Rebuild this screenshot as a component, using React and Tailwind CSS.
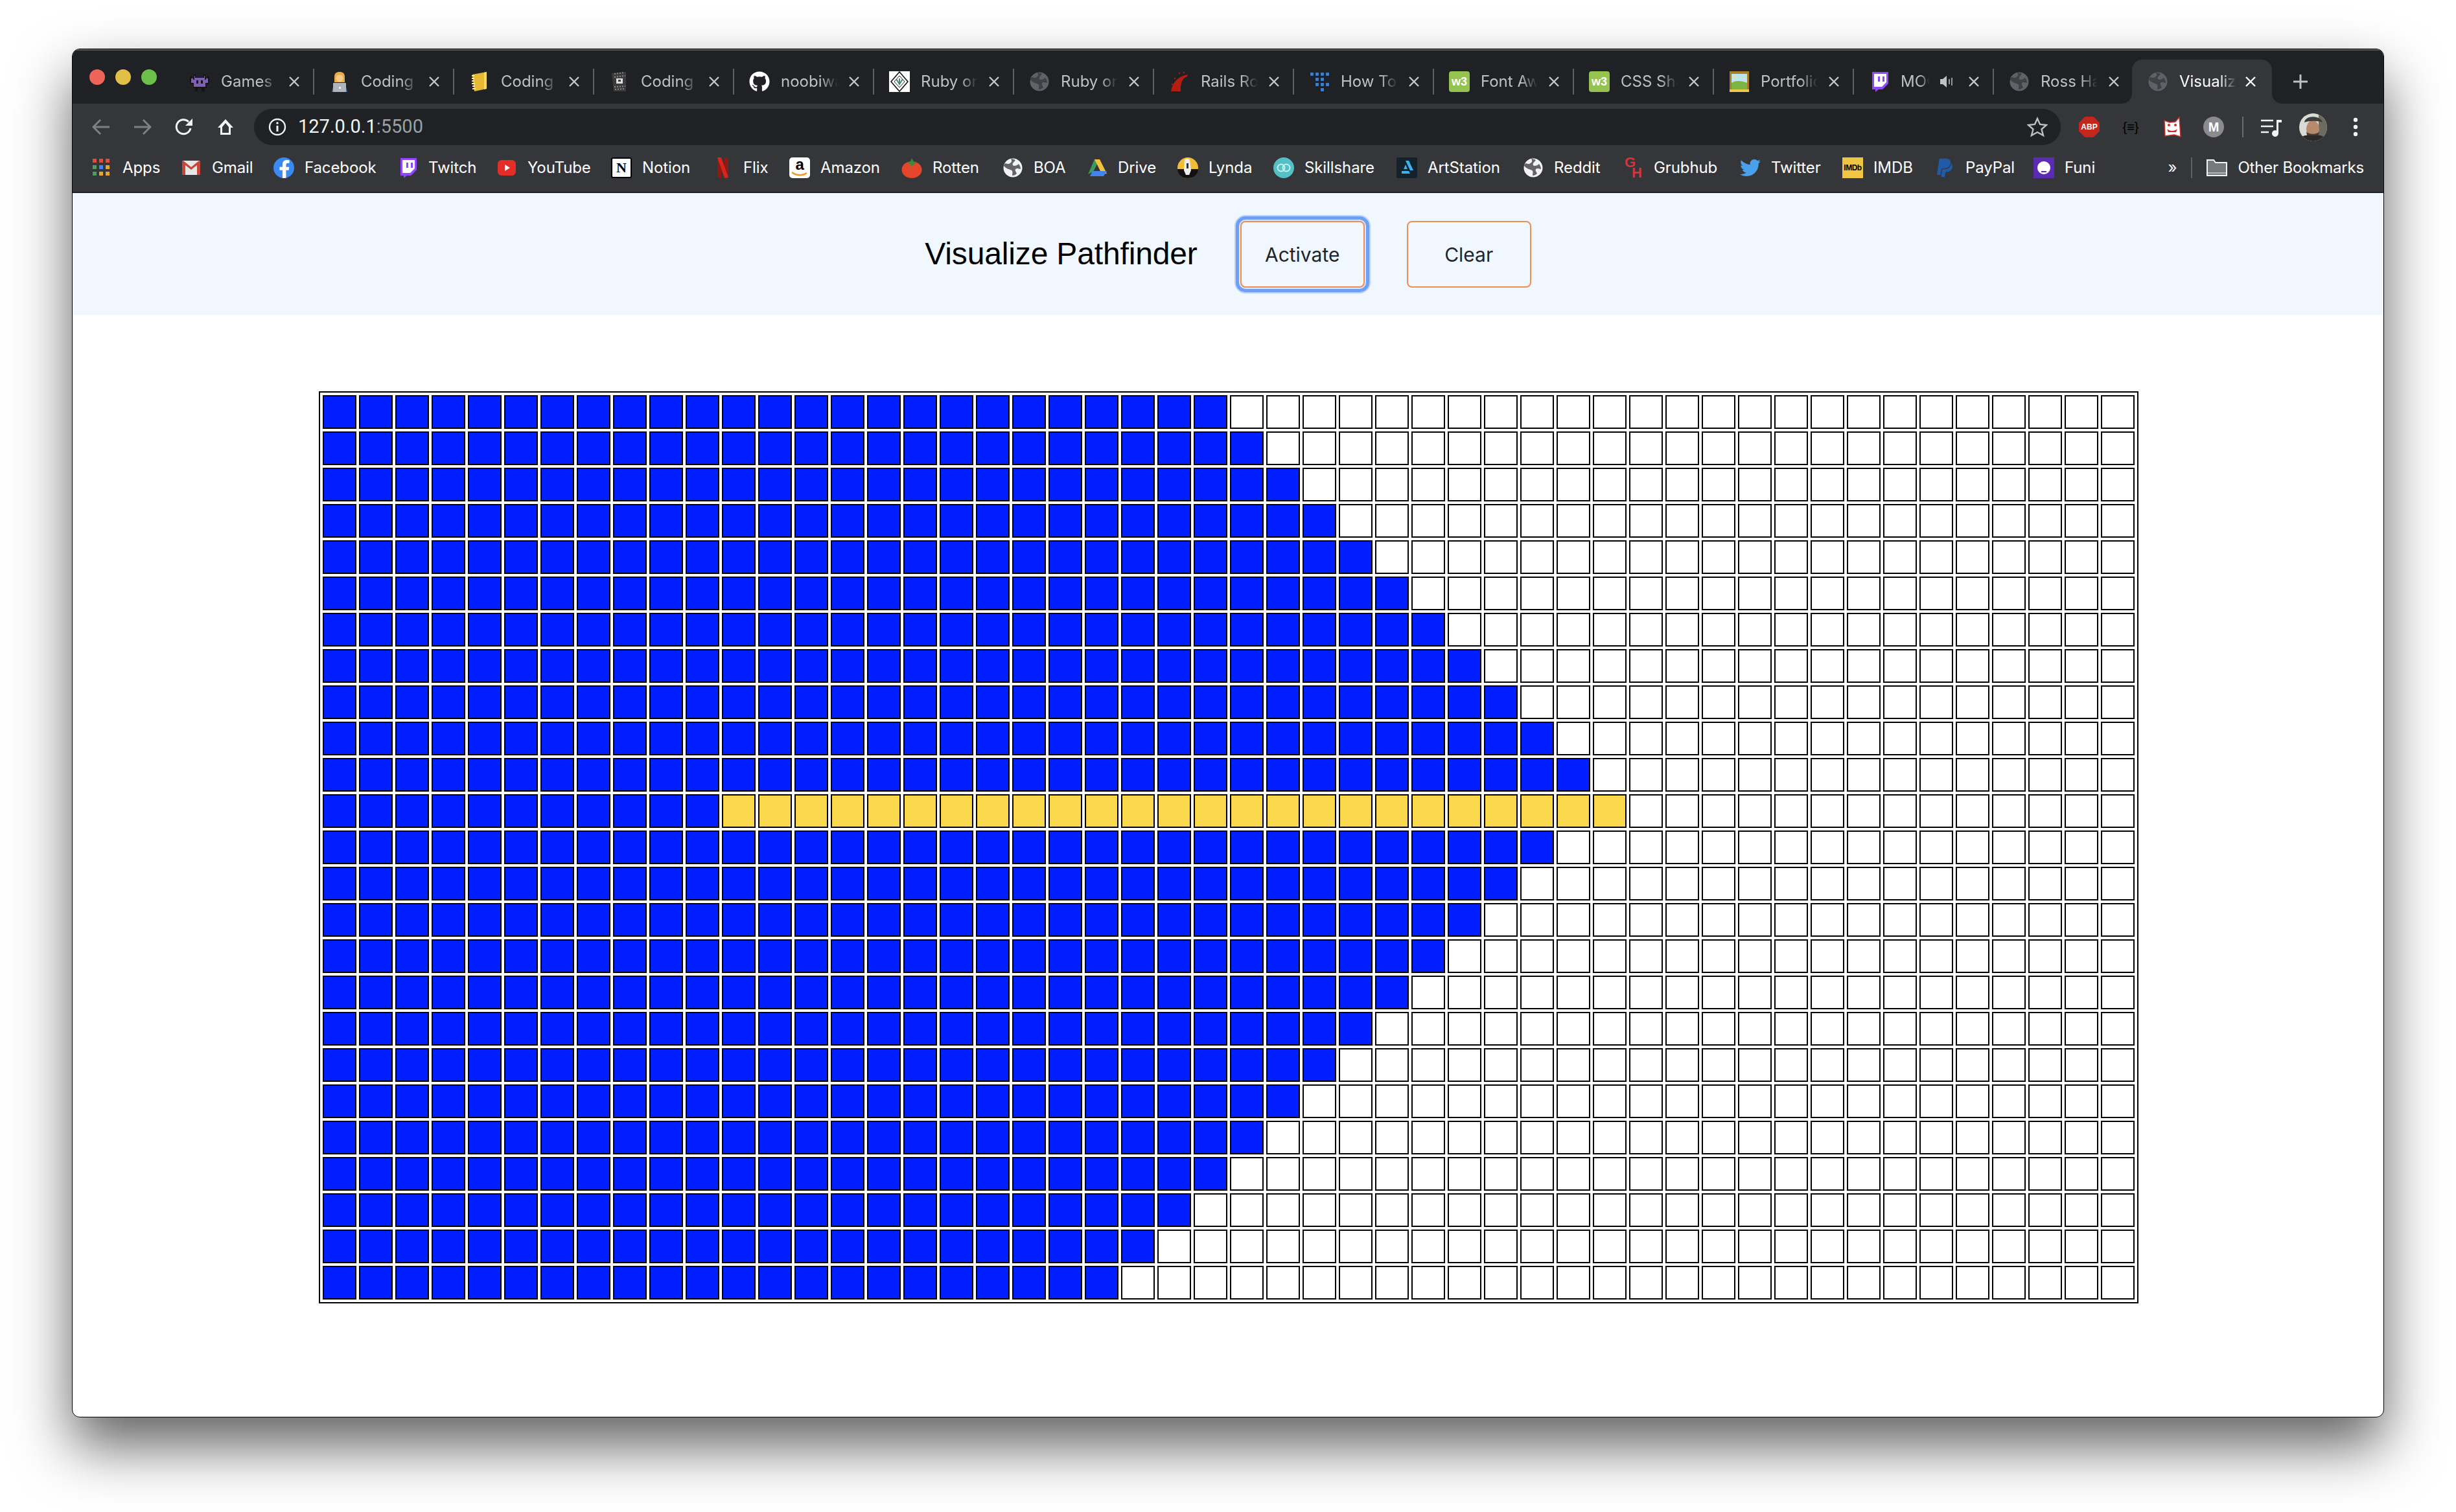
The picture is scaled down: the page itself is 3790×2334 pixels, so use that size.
import { FaGithub, FaTwitter, FaPaypal, FaFacebookF } from 'react-icons/fa'

const Fav = ({ children }) => (
  <svg viewBox="0 0 32 32" className="w-8 h-8 shrink-0">{children}</svg>
)

const Globe = ({ disc = '#5f6368', land = '#35363a' }) => (
  <Fav>
    <circle cx="16" cy="16" r="14.5" fill={disc} />
    <path d="M5 9c3 2 6 1 8-1 2-2 1-4 0-6 2 0 5 1 7 2-1 2-3 3-4 5-1 2 0 4 2 4 3 0 5-1 7-3 2 3 3 5 3 8-2 0-3-1-5-1-3 0-4 2-3 4l2 4c-2 2-4 3-7 3 0-3 1-5 0-7-1-2-4-2-6-3-3-1-5-3-7-5 0-2 1-3 3-4z" fill={land} opacity="0.75" />
  </Fav>
)

const Invader = () => (
  <Fav>
    <path d="M1 8h3v3h3V5h3v4h12V5h3v6h3V8h3v12h-4v6h-3v5h-5v-5h-6v5H9v-5H6v-6H1z" fill="#141414" />
    <path d="M3 11h3v2h2V7h1v3h14V7h1v6h2v-2h3v7h-4v6H7v-6H3z" fill="#7d5fb8" />
    <rect x="11" y="14" width="3" height="5" fill="#141414" />
    <rect x="18" y="14" width="3" height="5" fill="#141414" />
  </Fav>
)

const Coder = () => (
  <Fav>
    <path d="M8 9c0-6 3-8 8-8s8 2 8 8v8H8z" fill="#e9ad45" />
    <circle cx="16" cy="11" r="5.5" fill="#f3c78e" />
    <path d="M4 32l2-8c2-3 18-3 20 0l2 8z" fill="#3f6fb5" />
    <rect x="6" y="18" width="20" height="14" rx="1" fill="#aeb4bb" />
    <rect x="15" y="24" width="3" height="3" fill="#eee" />
  </Fav>
)

const YellowBook = () => (
  <Fav>
    <path d="M5 5l22-4v26L8 31z" fill="#e5b934" />
    <path d="M23 2l4-1v26l-4 1z" fill="#f5d96b" />
    <path d="M4 7h4M4 11h4M4 15h4M4 19h5M5 23h4M5 27h5" stroke="#fff1a8" strokeWidth="2" />
  </Fav>
)

const DarkBook = () => (
  <Fav>
    <path d="M4 3l22-2v30H7z" fill="#3b3b3b" />
    <path d="M8 4l16-2M8 9l17-2M8 24l17-1M9 28l16-1" stroke="#8a8a8a" strokeWidth="2" strokeDasharray="2 2" />
    <rect x="11" y="11" width="10" height="8" fill="#ddd" />
    <rect x="14" y="13" width="4" height="3" fill="#444" />
  </Fav>
)

const RubyDiamond = () => (
  <Fav>
    <rect width="32" height="32" fill="#fff" />
    <path d="M16 1l13 15-13 15L3 16z" fill="#fff" stroke="#111" strokeWidth="1.6" />
    <path d="M16 7l8 9-8 9-8-9z" fill="none" stroke="#222" strokeWidth="1" />
    <path d="M11 12l5 8 5-8M16 20v-9" fill="none" stroke="#4f8a6b" strokeWidth="2" />
  </Fav>
)

const Rails = () => (
  <Fav>
    <path d="M3 31C5 18 13 8 29 5l-1 3C20 11 17 20 18 31z" fill="#b51d12" />
    <circle cx="9" cy="11" r="1.2" fill="#b51d12" />
    <circle cx="16" cy="3" r="1.2" fill="#b51d12" />
    <circle cx="5" cy="20" r="1.2" fill="#b51d12" />
    <circle cx="23" cy="2" r="1.2" fill="#b51d12" />
  </Fav>
)

const Dots = () => (
  <Fav>
    <g fill="#3f7fc4">
      <rect x="2" y="2" width="5" height="5" rx="1" />
      <rect x="10" y="2" width="5" height="5" rx="1" />
      <rect x="18" y="2" width="5" height="5" rx="1" />
      <rect x="26" y="2" width="5" height="5" rx="1" />
      <rect x="10" y="10" width="5" height="5" rx="1" />
      <rect x="18" y="10" width="5" height="5" rx="1" />
      <rect x="10" y="18" width="5" height="5" rx="1" />
      <rect x="18" y="18" width="5" height="5" rx="1" />
      <rect x="26" y="18" width="5" height="5" rx="1" />
      <rect x="18" y="26" width="5" height="5" rx="1" />
    </g>
  </Fav>
)

const W3 = () => (
  <div className="w-8 h-8 shrink-0 rounded-[4px] bg-[#95c34f] flex items-center justify-center text-white text-[18px] leading-none font-bold font-['Liberation_Sans',sans-serif]">
    w3
  </div>
)

const Frame = () => (
  <Fav>
    <rect x="1" y="0" width="30" height="32" fill="#a87c28" />
    <rect x="4" y="4" width="24" height="24" fill="#bfe3ea" />
    <path d="M4 18c6-4 14-4 24 0v10H4z" fill="#7cb342" />
    <path d="M7 6h3v5H7z" fill="#f6e26b" />
    <rect x="1" y="28" width="30" height="4" fill="#eecb4a" />
  </Fav>
)

const Twitch = () => (
  <Fav>
    <path d="M5 1h25v18l-9 9h-6l-5 4v-4H5z" fill="#9146ff" />
    <path d="M8 4h19v13l-7 7H8z" fill="#fff" />
    <rect x="14" y="8" width="3" height="8" fill="#9146ff" />
    <rect x="21" y="8" width="3" height="8" fill="#9146ff" />
  </Fav>
)

const Gmail = () => (
  <Fav>
    <rect x="2" y="5" width="28" height="22" rx="2" fill="#e6e6e6" />
    <path d="M2 7v20h5V12l9 7 9-7v15h5V7c0-2-2-2-3-1L16 15 5 6C4 5 2 5 2 7z" fill="#c5473a" />
  </Fav>
)

const Facebook = () => (
  <div className="w-8 h-8 shrink-0 rounded-full bg-[#3b8af2] flex items-end justify-center overflow-hidden">
    <FaFacebookF className="w-6 h-7 text-white translate-x-[1px]" />
  </div>
)

const YouTube = () => (
  <Fav>
    <rect x="2" y="4" width="28" height="24" rx="6" fill="#e52d27" />
    <path d="M13 11l8 5-8 5z" fill="#fff" />
  </Fav>
)

const Notion = () => (
  <div className="w-8 h-8 shrink-0 bg-white border-2 border-black rounded-[3px] flex items-center justify-center text-black text-[22px] leading-none font-bold font-['Liberation_Serif',serif]">
    N
  </div>
)

const Netflix = () => (
  <Fav>
    <path d="M8 0h6v32l-6-1z" fill="#8f1a14" />
    <path d="M19 0h6v31l-6 1z" fill="#8f1a14" />
    <path d="M8 0h6l11 31-6 1z" fill="#d8241c" />
  </Fav>
)

const Amazon = () => (
  <div className="w-8 h-8 shrink-0 bg-white rounded-[5px] relative flex justify-center overflow-hidden">
    <span className="text-black text-[24px] leading-[22px] font-bold font-['Liberation_Sans',sans-serif]">a</span>
    <svg viewBox="0 0 32 10" className="absolute bottom-[1px] left-0 w-8 h-[10px]">
      <path d="M4 2c6 5 16 6 23 1" fill="none" stroke="#f19a2a" strokeWidth="2.5" />
    </svg>
  </div>
)

const Rotten = () => (
  <Fav>
    <ellipse cx="16" cy="19" rx="15.5" ry="13" fill="#e5452a" />
    <path d="M9 7l5 0 2-6 3 6 5 1-5 3-4 3-2-4z" fill="#3a8a3a" />
  </Fav>
)

const Drive = () => (
  <Fav>
    <path d="M12 3h8l-10 19-8 4z" fill="#3a9a5c" />
    <path d="M12 3h8l11 22h-8z" fill="#f2c33b" />
    <path d="M9 21h22l-5 8H5z" fill="#4583ec" />
  </Fav>
)

const Lynda = () => (
  <Fav>
    <circle cx="16" cy="16" r="16" fill="#f0bd35" />
    <path d="M0 18h32c0 8-7 14-16 14S0 26 0 18z" fill="#111" />
    <path d="M11 4c2-3 6-3 8 0l2 16-3 7h-5l-3-7z" fill="#eee" />
    <path d="M14 9h3v8h-3z" fill="#333" />
  </Fav>
)

const Skillshare = () => (
  <Fav>
    <circle cx="16" cy="16" r="16" fill="#52c0c5" />
    <circle cx="12" cy="16" r="5.5" fill="none" stroke="#c8f0ef" strokeWidth="2" />
    <circle cx="20" cy="16" r="5.5" fill="none" stroke="#c8f0ef" strokeWidth="2" />
  </Fav>
)

const ArtStation = () => (
  <Fav>
    <rect width="32" height="32" rx="3" fill="#13222b" />
    <path d="M14 5h5l7 15h-5z" fill="#3db2ee" />
    <path d="M8 21h11l2 4H8zM12 16l2-5 3 7h-6z" fill="#3db2ee" />
  </Fav>
)

const Grubhub = () => (
  <div className="w-8 h-8 shrink-0 relative text-[#d8333b] text-[22px] leading-none font-bold font-['Liberation_Sans',sans-serif]">
    <span className="absolute left-[3px] top-[-3px]">G</span>
    <span className="absolute left-[14px] top-[13px]">H</span>
  </div>
)

const Twitter = () => <FaTwitter className="w-8 h-8 shrink-0 text-[#4aa1eb]" />

const Imdb = () => (
  <div className="w-8 h-8 shrink-0 bg-[#f0c541] flex items-center justify-center text-black text-[12px] leading-none font-bold tracking-[-0.5px] font-['Liberation_Sans',sans-serif]">
    IMDb
  </div>
)

const Paypal = () => <FaPaypal className="w-8 h-8 shrink-0 text-[#1f5ba8]" />

const Funi = () => (
  <Fav>
    <rect width="32" height="32" fill="#5b2bb5" />
    <circle cx="16" cy="16" r="10" fill="#fff" />
    <rect x="12" y="21" width="8" height="2" fill="#5b2bb5" />
  </Fav>
)

const AppsGrid = () => {
  const colors = [
    'bg-[#e34b3c]', 'bg-[#e34b3c]', 'bg-[#e34b3c]',
    'bg-[#4f9e5f]', 'bg-[#4285f4]', 'bg-[#e8a332]',
    'bg-[#4f9e5f]', 'bg-[#e8a332]', 'bg-[#e8a332]',
  ]
  return (
    <div className="w-8 h-8 shrink-0 grid grid-cols-[repeat(3,6px)] auto-rows-[6px] gap-x-1 gap-y-1 pl-[2px] pt-[2px]">
      {colors.map((c, i) => (
        <div key={i} className={c} />
      ))}
    </div>
  )
}

const tabs = [
  { icon: <Invader />, title: 'Games for Kids' },
  { icon: <Coder />, title: 'Coding Notes' },
  { icon: <YellowBook />, title: 'Coding Book' },
  { icon: <DarkBook />, title: 'Coding Journal' },
  { icon: <FaGithub className="w-8 h-8 shrink-0 text-white" />, title: 'noobiwan' },
  { icon: <RubyDiamond />, title: 'Ruby on Rails' },
  { icon: <Globe />, title: 'Ruby on Rails' },
  { icon: <Rails />, title: 'Rails Routing' },
  { icon: <Dots />, title: 'How To Code' },
  { icon: <W3 />, title: 'Font Awesome' },
  { icon: <W3 />, title: 'CSS Shadows' },
  { icon: <Frame />, title: 'Portfolio Site' },
  { icon: <Twitch />, title: 'MOONMOON', audio: true },
  { icon: <Globe />, title: 'Ross Hall Site', last: true },
]

// widths keep each bookmark's label on the same x as the reference
const bookmarks = [
  { icon: <AppsGrid />, label: 'Apps', width: 'w-[138px]' },
  { icon: <Gmail />, label: 'Gmail', width: 'w-[143px]' },
  { icon: <Facebook />, label: 'Facebook', width: 'w-[191px]' },
  { icon: <Twitch />, label: 'Twitch', width: 'w-[153px]' },
  { icon: <YouTube />, label: 'YouTube', width: 'w-[177px]' },
  { icon: <Notion />, label: 'Notion', width: 'w-[156px]' },
  { icon: <Netflix />, label: 'Flix', width: 'w-[119px]' },
  { icon: <Amazon />, label: 'Amazon', width: 'w-[173px]' },
  { icon: <Rotten />, label: 'Rotten', width: 'w-[156px]' },
  { icon: <Globe disc="#f1f3f4" land="#35363a" />, label: 'BOA', width: 'w-[130px]' },
  { icon: <Drive />, label: 'Drive', width: 'w-[140px]' },
  { icon: <Lynda />, label: 'Lynda', width: 'w-[148px]' },
  { icon: <Skillshare />, label: 'Skillshare', width: 'w-[190px]' },
  { icon: <ArtStation />, label: 'ArtStation', width: 'w-[195px]' },
  { icon: <Globe disc="#f1f3f4" land="#35363a" />, label: 'Reddit', width: 'w-[154px]' },
  { icon: <Grubhub />, label: 'Grubhub', width: 'w-[181px]' },
  { icon: <Twitter />, label: 'Twitter', width: 'w-[158px]' },
  { icon: <Imdb />, label: 'IMDB', width: 'w-[142px]' },
  { icon: <Paypal />, label: 'PayPal', width: 'w-[153px]' },
  { icon: <Funi />, label: 'Funi', width: 'w-[100px]' },
]

const CloseX = ({ active }) => (
  <svg viewBox="0 0 18 18" className="w-[18px] h-[18px] shrink-0">
    <path d="M2 2l14 14M16 2L2 16" stroke={active ? '#ffffff' : '#c4c7cb'} strokeWidth="2.4" />
  </svg>
)

function Tab({ tab }) {
  return (
    <div className="w-[216px] h-[68px] shrink-0 flex items-center pl-[23px]">
      {tab.icon}
      <div
        className={`ml-[17px] overflow-hidden whitespace-nowrap text-[24px] text-[#bdc1c6] [mask-image:linear-gradient(to_right,#000_70%,transparent_100%)] ${
          tab.audio ? 'w-[44px]' : 'w-[88px]'
        }`}
      >
        {tab.title}
      </div>
      {tab.audio && (
        <svg viewBox="0 0 20 24" className="w-5 h-6 ml-4 mr-6 shrink-0">
          <path d="M1 8h4l6-5v18l-6-5H1z" fill="#bdc1c6" />
          <path d="M15 8v8M19 6v12" stroke="#bdc1c6" strokeWidth="1.5" />
        </svg>
      )}
      <div className={tab.audio ? '' : 'ml-4'}>
        <CloseX />
      </div>
      {!tab.last && <div className="ml-auto w-[2px] h-10 bg-[#5f6063]" />}
    </div>
  )
}

function ActiveTab() {
  return (
    <div className="relative w-[216px] h-[68px] ml-[-3px] shrink-0 flex items-center pl-6 rounded-t-2xl bg-[#35363a]">
      <svg viewBox="0 0 16 16" className="absolute left-[-16px] bottom-0 w-4 h-4">
        <path d="M16 0v16H0c9 0 16-7 16-16z" fill="#35363a" />
      </svg>
      <svg viewBox="0 0 16 16" className="absolute right-[-16px] bottom-0 w-4 h-4">
        <path d="M0 0v16h16C7 16 0 9 0 0z" fill="#35363a" />
      </svg>
      <Globe />
      <div className="ml-[17px] w-[88px] overflow-hidden whitespace-nowrap text-[24px] text-white [mask-image:linear-gradient(to_right,#000_70%,transparent_100%)]">
        Visualize Pathfinder
      </div>
      <div className="ml-[13px]">
        <CloseX active />
      </div>
    </div>
  )
}

function TabBar() {
  return (
    <div className="h-[84px] flex items-start pt-4 bg-[#202124] shadow-[inset_0_2px_0_#58585a]">
      <div className="ml-[26px] mt-[15px] flex gap-4 shrink-0">
        <div className="w-6 h-6 rounded-full bg-[#ee6457]" />
        <div className="w-6 h-6 rounded-full bg-[#e2bf46]" />
        <div className="w-6 h-6 rounded-full bg-[#6cc04a]" />
      </div>
      <div className="ml-[27px] flex">
        {tabs.map((tab, i) => (
          <Tab key={i} tab={tab} />
        ))}
        <ActiveTab />
        <svg viewBox="0 0 24 24" className="w-6 h-6 ml-8 mt-[22px] shrink-0">
          <path d="M12 1v22M1 12h22" stroke="#bdc1c6" strokeWidth="3" />
        </svg>
      </div>
    </div>
  )
}

function Toolbar() {
  return (
    <div className="h-[72px] flex items-center pl-[30px] bg-[#35363a]">
      <div className="flex items-center gap-9 shrink-0">
        <svg viewBox="0 0 28 28" className="w-7 h-7">
          <path d="M27 14H2M13 3L2 14l11 11" fill="none" stroke="#7e8083" strokeWidth="3" />
        </svg>
        <svg viewBox="0 0 28 28" className="w-7 h-7">
          <path d="M1 14h25M15 3l11 11-11 11" fill="none" stroke="#7e8083" strokeWidth="3" />
        </svg>
        <svg viewBox="0 0 28 28" className="w-7 h-7">
          <path d="M24 16a11 11 0 1 1-3-10" fill="none" stroke="#f1f3f4" strokeWidth="3" />
          <path d="M27 1v11H16z" fill="#f1f3f4" />
        </svg>
        <svg viewBox="0 0 28 28" className="w-7 h-7">
          <path d="M14 2L2 15h4v11h16V15h4zM9 14l5-6 5 6v9H9z" fill="#f1f3f4" fillRule="evenodd" />
        </svg>
      </div>
      <div className="ml-[30px] w-[2788px] h-14 shrink-0 rounded-full bg-[#202124] flex items-center pl-[22px]">
        <svg viewBox="0 0 28 28" className="w-7 h-7 shrink-0">
          <circle cx="14" cy="14" r="12" fill="none" stroke="#f1f3f4" strokeWidth="2.4" />
          <path d="M14 12v9" stroke="#f1f3f4" strokeWidth="3" />
          <circle cx="14" cy="8" r="1.8" fill="#f1f3f4" />
        </svg>
        <div className="ml-[18px] text-[29px] text-[#f1f3f4] font-['Roboto',sans-serif]">
          127.0.0.1<span className="text-[#9aa0a6]">:5500</span>
        </div>
        <svg viewBox="0 0 32 32" className="w-8 h-8 ml-auto mr-5 shrink-0">
          <path d="M16 3l4 9 10 1-7.5 6.5L25 29l-9-5-9 5 2.5-9.5L2 13l10-1z" fill="none" stroke="#bdc1c6" strokeWidth="2.4" />
        </svg>
      </div>
      <div className="ml-7 flex items-center gap-8 shrink-0">
        <div className="w-8 h-8 bg-[#c3271c] [clip-path:polygon(30%_0,70%_0,100%_30%,100%_70%,70%_100%,30%_100%,0_70%,0_30%)] flex items-center justify-center text-white text-[12px] leading-none font-bold font-['Liberation_Sans',sans-serif]">
          ABP
        </div>
        <div className="w-8 h-8 flex items-center justify-center text-black text-[20px] leading-none font-['Liberation_Sans',sans-serif]">
          {'{≡}'}
        </div>
        <svg viewBox="0 0 32 32" className="w-8 h-8 shrink-0">
          <path d="M4 6l8 3 9-1 6-7 2 30-10-3-14 2z" fill="#fff" stroke="#c9302c" strokeWidth="1.5" />
          <circle cx="11" cy="13" r="2" fill="#c9302c" />
          <circle cx="21" cy="13" r="2" fill="#c9302c" />
          <path d="M8 19c4 4 12 4 16 0l-2 5H10z" fill="#c9302c" />
        </svg>
        <div className="w-8 h-8 rounded-full bg-[#8b8b8b] flex items-center justify-center text-white text-[20px] leading-none font-bold font-['Liberation_Sans',sans-serif]">
          M
        </div>
      </div>
      <div className="ml-7 w-[2px] h-8 bg-[#6b6c6f] shrink-0" />
      <svg viewBox="0 0 32 32" className="w-8 h-8 ml-[27px] shrink-0">
        <path d="M0 6h19M0 15h19M0 24h12" stroke="#f1f3f4" strokeWidth="2.6" />
        <path d="M24 5h8v4h-5v17a5 5 0 1 1-3-4.6z" fill="#f1f3f4" />
      </svg>
      <svg viewBox="0 0 43 43" className="w-[43px] h-[43px] ml-[27px] shrink-0">
        <clipPath id="avatar-clip">
          <circle cx="21.5" cy="21.5" r="21.5" />
        </clipPath>
        <g clipPath="url(#avatar-clip)">
          <rect width="43" height="43" fill="#d9dcd4" />
          <rect x="30" width="13" height="43" fill="#6d6a60" />
          <ellipse cx="21" cy="24" rx="10" ry="13" fill="#b78a6c" />
          <path d="M8 14C9 3 32 2 36 14c-8-3-20-3-28 0z" fill="#3e3d39" />
          <path d="M11 28c3 5 17 5 20 0l-2 12H13z" fill="#4a3a2e" />
          <path d="M0 43c2-8 8-9 12-9l18 0c5 0 11 2 13 9z" fill="#2a2a28" />
        </g>
      </svg>
      <svg viewBox="0 0 8 30" className="w-2 h-[30px] ml-10 shrink-0">
        <circle cx="4" cy="4" r="3.2" fill="#f1f3f4" />
        <circle cx="4" cy="15" r="3.2" fill="#f1f3f4" />
        <circle cx="4" cy="26" r="3.2" fill="#f1f3f4" />
      </svg>
    </div>
  )
}

function BookmarksBar() {
  return (
    <div className="h-[66px] pb-[10px] border-b-2 border-[#202124] flex items-center pl-[29px] bg-[#35363a] text-[24px] text-white">
      <div className="flex items-center">
        {bookmarks.map((b) => (
          <div key={b.label} className={`flex items-center gap-4 shrink-0 tracking-[-0.1px] ${b.width}`}>
            {b.icon}
            <span>{b.label}</span>
          </div>
        ))}
      </div>
      <span className="ml-auto text-[24px] leading-none">»</span>
      <div className="ml-[22px] w-[2px] h-8 bg-[#5f6063]" />
      <svg viewBox="0 0 32 26" className="w-8 h-[26px] ml-[22px] shrink-0">
        <path d="M1 1h10l3 4h17v20H1z" fill="#77787b" stroke="#f1f3f4" strokeWidth="2" />
        <path d="M1 21h30" stroke="#f1f3f4" strokeWidth="1" />
      </svg>
      <span className="ml-4 mr-[30px] tracking-[-0.2px]">Other Bookmarks</span>
    </div>
  )
}

function Header() {
  return (
    <div className="h-[188px] bg-[#f0f7ff] flex items-center justify-center">
      <h1 className="text-[48px] leading-none tracking-[-0.15px] text-black font-['Liberation_Sans',sans-serif]">
        Visualize Pathfinder
      </h1>
      <button className="ml-[66px] w-[192px] h-[103px] pt-[2px] border-2 border-[#f18d52] rounded-lg text-[30px] text-[#212529] shadow-[0_0_0_2px_#dce8fd,0_0_0_7px_#6f9ef5,0_0_0_9px_#bcd2fb]">
        Activate
      </button>
      <button className="ml-[65px] w-[192px] h-[103px] pt-[2px] border-2 border-[#f18d52] rounded-lg text-[30px] text-[#212529]">
        Clear
      </button>
    </div>
  )
}

const ROWS = 25
const COLS = 50
const blueCounts = [25, 26, 27, 28, 29, 30, 31, 32, 33, 34, 35, 11, 34, 33, 32, 31, 30, 29, 28, 27, 26, 25, 24, 23, 22]
const PATH_ROW = 11
const PATH_START = 11
const PATH_END = 36

function cellColor(row, col) {
  if (row === PATH_ROW && col >= PATH_START && col < PATH_END) return 'bg-[#fbd84e]'
  if (col < blueCounts[row]) return 'bg-[#001eff]'
  return 'bg-white'
}

function Grid() {
  const cells = []
  for (let r = 0; r < ROWS; r++) {
    for (let c = 0; c < COLS; c++) {
      cells.push(<div key={`${r}-${c}`} className={`border-2 border-black ${cellColor(r, c)}`} />)
    }
  }
  return (
    <div className="grid grid-cols-[repeat(50,52px)] auto-rows-[52px] gap-1 p-1 border-2 border-black">{cells}</div>
  )
}

export default function App() {
  return (
    <div className="w-[3790px] h-[2334px] bg-white pt-[75px] pl-[111px] font-['Inter',sans-serif]">
      <div className="w-[3568px] h-[2113px] border border-black rounded-[12px] overflow-hidden bg-white shadow-[0_44px_88px_rgba(0,0,0,0.62)]">
        <TabBar />
        <Toolbar />
        <BookmarksBar />
        <Header />
        <div className="flex justify-center pt-[118px] pl-[2px]">
          <Grid />
        </div>
      </div>
    </div>
  )
}
